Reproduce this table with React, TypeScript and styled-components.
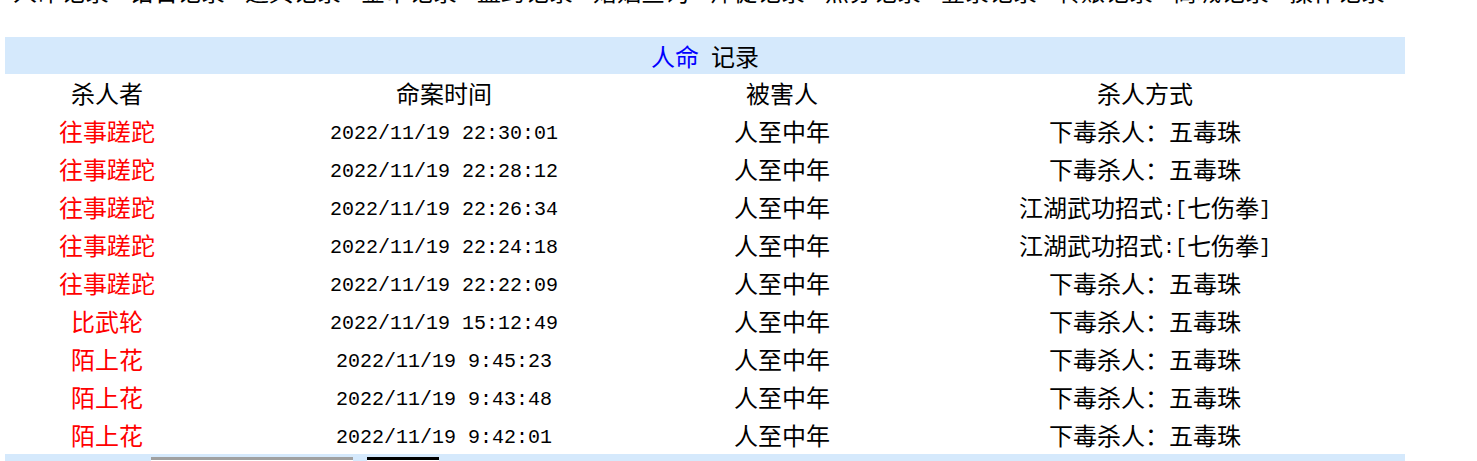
import React from "react";
import styled, { createGlobalStyle } from "styled-components";

const GlobalStyle = createGlobalStyle`
  html, body { margin: 0; padding: 0; background: #ffffff; }
  body {
    font-family: "Noto Sans CJK SC", "Noto Sans", sans-serif;
    color: #000000;
    overflow: hidden;
  }
`;

const Page = styled.div`
  width: 1477px;
  height: 461px;
  overflow: hidden;
  padding-left: 5px;
  box-sizing: border-box;
`;

const Nav = styled.nav`
  display: flex;
  gap: 20px;
  margin-top: -24px;
  padding-left: 8px;
  height: 29px;
  line-height: 29px;
  font-size: 24px;
  white-space: nowrap;
`;

const NavLink = styled.span`
  color: #000000;
`;

const Board = styled.section`
  width: 1400px;
  margin-top: 32px;
`;

const TitleBar = styled.div`
  height: 37px;
  line-height: 37px;
  background: #d5e9fc;
  text-align: center;
  font-size: 24px;
`;

const TitleAccent = styled.span`
  color: #0000ff;
  margin-right: 12px;
`;

const Row = styled.div`
  display: grid;
  grid-template-columns: 204px 470px 206px 520px;
  height: 38px;
  line-height: 38px;
  font-size: 24px;
  text-align: center;
`;

const Cell = styled.div<{ $red?: boolean }>`
  color: ${(p) => (p.$red ? "#ff0000" : "#000000")};
  white-space: nowrap;
`;

const Mono = styled.span`
  font-family: "Liberation Mono", "DejaVu Sans Mono", monospace;
  font-size: 20px;
  vertical-align: 2px;
`;

const Footer = styled.div`
  display: flex;
  align-items: flex-start;
  gap: 14px;
  height: 20px;
  padding: 3px 0 0 146px;
  background: #d5e9fc;
  box-sizing: border-box;
`;

const PagerInput = styled.div`
  width: 202px;
  height: 20px;
  border-top: 3px solid #a0a0a0;
  box-sizing: border-box;
  background: #ffffff;
`;

const PagerButton = styled.div`
  width: 72px;
  height: 20px;
  border-top: 3px solid #000000;
  box-sizing: border-box;
  background: #ffffff;
`;

const navItems = [
  "人命记录",
  "钻石记录",
  "道具记录",
  "金币记录",
  "盟约记录",
  "婚姻查询",
  "师徒记录",
  "点券记录",
  "登录记录",
  "转账记录",
  "商城记录",
  "操作记录",
];

type Rec = { killer: string; time: string; victim: string; method: string };

const poison = "下毒杀人：五毒珠";
const skill = "江湖武功招式:[七伤拳]";

const records: Rec[] = [
  { killer: "往事蹉跎", time: "2022/11/19 22:30:01", victim: "人至中年", method: poison },
  { killer: "往事蹉跎", time: "2022/11/19 22:28:12", victim: "人至中年", method: poison },
  { killer: "往事蹉跎", time: "2022/11/19 22:26:34", victim: "人至中年", method: skill },
  { killer: "往事蹉跎", time: "2022/11/19 22:24:18", victim: "人至中年", method: skill },
  { killer: "往事蹉跎", time: "2022/11/19 22:22:09", victim: "人至中年", method: poison },
  { killer: "比武轮", time: "2022/11/19 15:12:49", victim: "人至中年", method: poison },
  { killer: "陌上花", time: "2022/11/19 9:45:23", victim: "人至中年", method: poison },
  { killer: "陌上花", time: "2022/11/19 9:43:48", victim: "人至中年", method: poison },
  { killer: "陌上花", time: "2022/11/19 9:42:01", victim: "人至中年", method: poison },
];

// Split text so half-width ASCII runs render in a fixed-width face (as in the reference).
function renderMixed(text: string) {
  const parts = text.match(/[\x20-\x7e]+|[^\x20-\x7e]+/g) || [];
  return parts.map((p, i) =>
    /^[\x20-\x7e]+$/.test(p) ? <Mono key={i}>{p}</Mono> : <React.Fragment key={i}>{p}</React.Fragment>
  );
}

export default function App() {
  return (
    <>
      <GlobalStyle />
      <Page>
        <Nav>
          {navItems.map((n) => (
            <NavLink key={n}>{n}</NavLink>
          ))}
        </Nav>
        <Board>
          <TitleBar>
            <TitleAccent>人命</TitleAccent>记录
          </TitleBar>
          <Row>
            <Cell>杀人者</Cell>
            <Cell>命案时间</Cell>
            <Cell>被害人</Cell>
            <Cell>杀人方式</Cell>
          </Row>
          {records.map((r, i) => (
            <Row key={i}>
              <Cell $red>{r.killer}</Cell>
              <Cell>
                <Mono>{r.time}</Mono>
              </Cell>
              <Cell>{r.victim}</Cell>
              <Cell>{renderMixed(r.method)}</Cell>
            </Row>
          ))}
          <Footer>
            <PagerInput />
            <PagerButton />
          </Footer>
        </Board>
      </Page>
    </>
  );
}
